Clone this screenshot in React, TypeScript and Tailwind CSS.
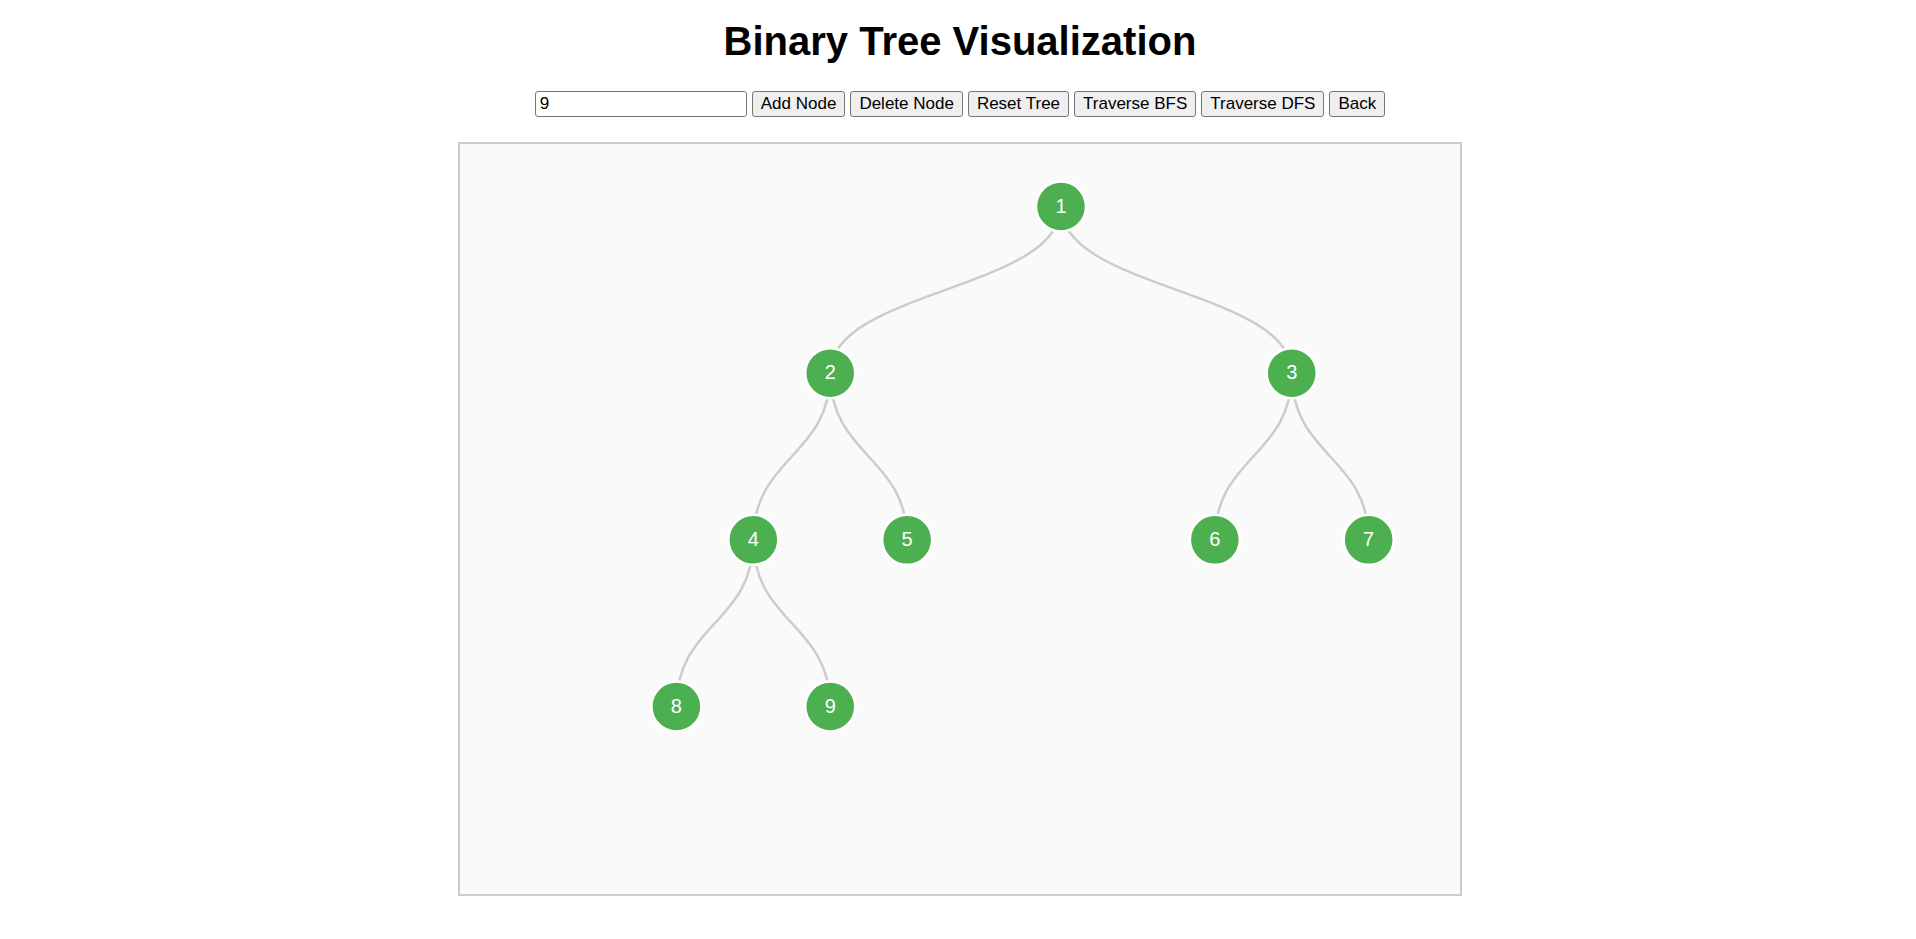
import { useState } from "react";

const BUTTON =
  "h-[26px] rounded-[3px] border border-[#767676] bg-[#efefef] px-2 text-[17px] leading-5 text-black hover:bg-[#e5e5e5]";

const VIEW_WIDTH = 1000;
const VIEW_HEIGHT = 750;
const TOP = 62.5;
const LEVEL_HEIGHT = 500 / 3;
const UNIT = 76.92;
const LEFT = 216.4;
const RADIUS = 25;

type TreeNode = { value: number; column: number; depth: number; parent?: number };

const NODES: TreeNode[] = [
  { value: 1, column: 5, depth: 0 },
  { value: 2, column: 2, depth: 1, parent: 1 },
  { value: 3, column: 8, depth: 1, parent: 1 },
  { value: 4, column: 1, depth: 2, parent: 2 },
  { value: 5, column: 3, depth: 2, parent: 2 },
  { value: 6, column: 7, depth: 2, parent: 3 },
  { value: 7, column: 9, depth: 2, parent: 3 },
  { value: 8, column: 0, depth: 3, parent: 4 },
  { value: 9, column: 2, depth: 3, parent: 4 },
];

const position = (node: TreeNode) => ({
  x: LEFT + node.column * UNIT,
  y: TOP + node.depth * LEVEL_HEIGHT,
});

function Link({ from, to }: { from: TreeNode; to: TreeNode }) {
  const a = position(from);
  const b = position(to);
  const middle = (a.y + b.y) / 2;
  return (
    <path
      d={`M${a.x},${a.y}C${a.x},${middle} ${b.x},${middle} ${b.x},${b.y}`}
      strokeWidth={2.5}
      className="fill-none stroke-[#ccc]"
    />
  );
}

function Node({ node }: { node: TreeNode }) {
  const { x, y } = position(node);
  return (
    <g transform={`translate(${x},${y})`}>
      <circle r={RADIUS} strokeWidth={2.5} className="fill-[#4caf50] stroke-white" />
      <text y={6} textAnchor="middle" className="fill-white text-[20px]">
        {node.value}
      </text>
    </g>
  );
}

export default function App() {
  const [value, setValue] = useState("9");

  return (
    <main className="flex flex-col items-center pl-1 font-['Liberation_Sans',Arial,sans-serif] text-black">
      <h1 className="mt-[17px] text-[40px] leading-[48px] font-bold">Binary Tree Visualization</h1>

      <div className="mt-[26px] flex flex-wrap justify-center gap-[5px]">
        <input
          type="text"
          aria-label="Node value"
          value={value}
          onChange={(event) => setValue(event.target.value)}
          className="h-[26px] w-[212px] rounded-[3px] border border-[#767676] bg-white px-1 text-[17px] leading-5"
        />
        <button type="button" className={BUTTON}>Add Node</button>
        <button type="button" className={BUTTON}>Delete Node</button>
        <button type="button" className={BUTTON}>Reset Tree</button>
        <button type="button" className={BUTTON}>Traverse BFS</button>
        <button type="button" className={BUTTON}>Traverse DFS</button>
        <button type="button" className={BUTTON}>Back</button>
      </div>

      <div className="mt-[25px] w-full max-w-[1004px] border-2 border-[#ccc] bg-[#fafafa]">
        <svg
          viewBox={`0 0 ${VIEW_WIDTH} ${VIEW_HEIGHT}`}
          className="block w-full"
          role="group"
          aria-label="Binary tree"
        >
          {NODES.map((node) => {
            const parent = NODES.find((other) => other.value === node.parent);
            return parent && <Link key={node.value} from={parent} to={node} />;
          })}
          {NODES.map((node) => (
            <Node key={node.value} node={node} />
          ))}
        </svg>
      </div>
    </main>
  );
}
